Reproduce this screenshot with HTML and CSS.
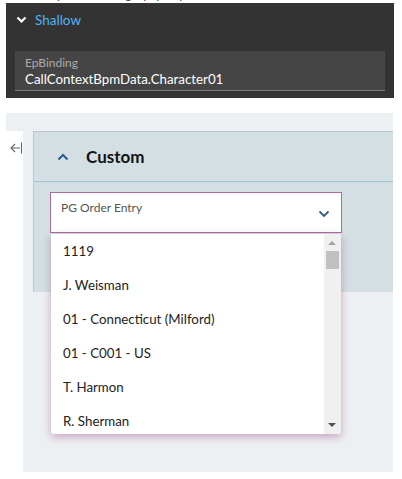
FILE: index.html
```html
<!DOCTYPE html>
<html lang="en">
<head>
  <meta charset="UTF-8">
  <meta name="viewport" content="width=device-width, initial-scale=1.0">
  <title>Custom binding</title>
  <link rel="stylesheet" href="styles.css">
</head>
<body>

  <div class="page">

    <div class="cut-line">
      <span>Set up the binding by query</span>
    </div>

    <section class="props">
      <div class="props-head">
        <svg class="chev" width="11" height="8" viewBox="0 0 11 8">
          <path d="M1.5 1.5 L5.5 5.5 L9.5 1.5" fill="none" stroke="#fff" stroke-width="2.2"/>
        </svg>
        <span>Shallow</span>
      </div>
      <div class="field">
        <div class="field-label">EpBinding</div>
        <div class="field-value">CallContextBpmData.Character01</div>
      </div>
    </section>

    <section class="work">
      <div class="side">
        <svg width="13" height="12" viewBox="0 0 13 12">
          <path d="M1 6 H10 M5 2 L1 6 L5 10 M11.5 0.5 V11.5" fill="none" stroke="#666" stroke-width="1.1"/>
        </svg>
      </div>

      <div class="panel">
        <div class="panel-head">
          <svg width="12" height="8" viewBox="0 0 12 8">
            <path d="M1.5 6.5 L6 2 L10.5 6.5" fill="none" stroke="#2d5b8c" stroke-width="2"/>
          </svg>
          <span>Custom</span>
        </div>
        <div class="panel-body">
          <div class="combo">
            <div class="combo-label">PG Order Entry</div>
            <svg class="combo-chev" width="12" height="8" viewBox="0 0 12 8">
              <path d="M1.5 1.5 L6 6 L10.5 1.5" fill="none" stroke="#2d5b8c" stroke-width="1.8"/>
            </svg>
          </div>
        </div>
      </div>

      <div class="list">
        <ul>
          <li>1119</li>
          <li>J. Weisman</li>
          <li>01 - Connecticut (Milford)</li>
          <li>01 - C001 - US</li>
          <li>T. Harmon</li>
          <li>R. Sherman</li>
        </ul>
        <div class="scroll">
          <div class="arrow-up"></div>
          <div class="thumb"></div>
          <div class="arrow-down"></div>
        </div>
      </div>
    </section>

  </div>

</body>
</html>
```

FILE: styles.css
```css
body {
  font-family: Lato, "Open Sans", sans-serif;
  margin: 0;
  background-color: #fff;
}
.page {
  width: 388px;
  margin-left: 6px;
}
.cut-line {
  height: 3px;
  overflow: hidden;
  position: relative;
}
.cut-line span {
  position: absolute;
  left: 22px;
  top: -13px;
  font-size: 13px;
  line-height: 15px;
  color: #5c3a74;
  white-space: nowrap;
}
.props {
  background-color: #333;
  height: 95px;
  padding: 0 9px;
  box-sizing: border-box;
}
.props-head {
  display: flex;
  align-items: center;
  height: 34px;
  padding-left: 1px;
  color: #4fb4f7;
  font-size: 13.5px;
}
.props-head .chev {
  margin-right: 8px;
}
.field {
  margin-top: 14px;
  background-color: #454545;
  border-bottom: 1px solid #7a7a7a;
  height: 40px;
  padding: 5px 10px 0;
  box-sizing: border-box;
}
.field-label {
  color: #aaa;
  font-size: 12px;
  line-height: 14px;
}
.field-value {
  color: #fff;
  font-size: 13.3px;
  line-height: 18px;
}
.work {
  margin-top: 15px;
  background-color: #edf0f3;
  height: 359px;
  padding-top: 18px;
  box-sizing: border-box;
  display: flex;
  align-items: flex-start;
  position: relative;
  width: 387px;
}
.side {
  width: 17px;
  align-self: stretch;
  background-color: #fff;
  padding-top: 7px;
  box-sizing: border-box;
  padding-left: 4px;
}
.panel {
  margin-left: 10px;
  flex: 1;
  background-color: #d4dfe4;
  border-top: 1px solid #b6c9d0;
  border-left: 1px solid #b6c9d0;
  height: 161px;
  box-sizing: border-box;
}
.panel-head {
  height: 50px;
  border-bottom: 1px solid #9fc6d3;
  box-sizing: border-box;
  display: flex;
  align-items: center;
  padding-left: 23px;
  font-size: 17px;
  font-weight: bold;
  color: #111;
}
.panel-head span {
  margin-left: 17px;
}
.panel-body {
  padding: 10px 0 0 16px;
}
.combo {
  width: 292px;
  height: 41px;
  border: 1px solid #ad6b9c;
  background-color: #fff;
  box-sizing: border-box;
  position: relative;
}
.combo-label {
  font-size: 12px;
  color: #555;
  padding: 7px 0 0 10px;
}
.combo-chev {
  position: absolute;
  right: 11px;
  top: 17px;
}
.list {
  position: absolute;
  left: 45px;
  top: 121px;
  width: 290px;
  height: 200px;
  background-color: #fff;
  box-shadow: 0 3px 8px rgba(150, 70, 130, 0.45);
  border-radius: 0 0 3px 3px;
  display: flex;
  overflow: hidden;
}
.list ul {
  list-style: none;
  margin: 0;
  padding: 0;
  flex: 1;
}
.list li {
  height: 34px;
  line-height: 34px;
  padding-left: 12px;
  font-size: 13.3px;
  color: #222;
}
.scroll {
  width: 17px;
  background-color: #f0f0f0;
  position: relative;
}
.thumb {
  position: absolute;
  left: 2px;
  top: 17px;
  width: 13px;
  height: 18px;
  background-color: #c1c1c1;
}
.arrow-up, .arrow-down {
  position: absolute;
  left: 4px;
  width: 0;
  height: 0;
  border-left: 4px solid transparent;
  border-right: 4px solid transparent;
}
.arrow-up {
  top: 7px;
  border-bottom: 4px solid #a3a3a3;
}
.arrow-down {
  bottom: 7px;
  border-top: 4px solid #505050;
}
```
